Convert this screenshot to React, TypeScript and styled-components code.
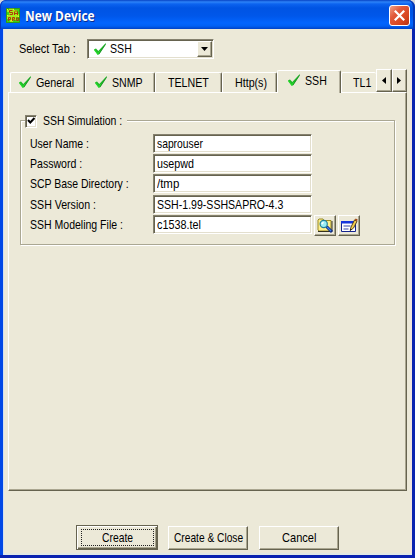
import React, { useLayoutEffect, useRef, useState } from 'react';
import styled, { createGlobalStyle, css } from 'styled-components';

const face = '#ece9d8';
const shade = '#85816f';
const dark = '#66634f';

const GlobalStyle = createGlobalStyle`
  * { box-sizing: border-box; }
  html, body { margin: 0; padding: 0; background: #d8d8d8; overflow: hidden; }
  button, input { font: inherit; margin: 0; }
`;

const Window = styled.main`
  width: 415px;
  height: 558px;
  display: flex;
  flex-direction: column;
  overflow: hidden;
  border-radius: 6px 7px 0 0;
  background: linear-gradient(90deg, #0148e6 0, #0148e6 50%, #0a22b0 100%);
  box-shadow: inset 0 -3px #0a22b0;
  color: #000;
  font: 13px/16px 'Liberation Sans', Arial, sans-serif;
`;

const TitleBar = styled.header`
  height: 29px;
  flex: none;
  display: flex;
  align-items: flex-start;
  padding: 8px 5px 0 6px;
  border-radius: 6px 7px 0 0;
  background: linear-gradient(#0743c4 0, #2d83f8 2px, #0c63ef 4px, #0054e3 8px, #0057ea 16px, #0265fe 23px, #0060f4 26px, #0042c6 29px);
  box-shadow: inset 1px 0 #0831b8, inset -2px 0 #0437b4;
`;

const Title = styled.h1`
  margin: -1px 0 0 5px;
  flex: 1;
  color: #fff;
  font: bold 14px/18px 'Open Sans', 'Noto Sans', sans-serif;
  text-shadow: 1px 1px #0a2a8c;
`;

const CloseButton = styled.button`
  width: 21px;
  height: 21px;
  margin-top: -3px;
  padding: 0;
  border: 1px solid #fff;
  border-radius: 3px;
  background: linear-gradient(135deg, #f0a188, #e1593a 35%, #d84620 70%, #b93412);
  svg { display: block; }
`;

const Client = styled.div`
  flex: none;
  width: 409px;
  height: 526px;
  margin-left: 3px;
  padding: 9px 6px 0 5px;
  background: ${face};
  box-shadow: inset 1px 0 #d4e0ee, inset 0 -2px #e2e9e4, inset -2px 0 #f1e4dc;
`;

const TextBox = styled.span<{ $w: number }>`
  display: block;
  flex: none;
  width: ${p => p.$w}px;
  white-space: nowrap;
`;

const Glyphs = styled.span`
  display: inline-block;
  transform-origin: 0 50%;
`;

function Text({ w, children }: { w: number; children: string }) {
  const ref = useRef<HTMLSpanElement>(null);
  const [scale, setScale] = useState(1);
  useLayoutEffect(() => {
    if (ref.current) setScale(w / ref.current.offsetWidth);
  }, [w, children]);
  return (
    <TextBox $w={w}>
      <Glyphs ref={ref} style={{ transform: `scaleX(${scale})` }}>{children}</Glyphs>
    </TextBox>
  );
}

const SelectRow = styled.div`
  display: flex;
  align-items: center;
  height: 20px;
  margin-top: 1px;
  padding-left: 9px;
  gap: 13px;
`;

const SelectLabel = styled.div`
  padding-left: 2px;
  width: 57px;
`;

const sunken = css`
  background: #fff;
  border: 1px solid;
  border-color: ${shade} #fff #fff ${shade};
  box-shadow: inset 1px 1px ${dark}, inset -1px -1px #e3dfce;
`;

const raised = css`
  background: ${face};
  border: 1px solid;
  border-color: #fff ${dark} ${dark} #fff;
  box-shadow: inset -1px -1px #aaa690;
`;

const Select = styled.div`
  ${sunken}
  width: 127px;
  height: 20px;
  display: flex;
  align-items: center;
  padding: 0 1px 0 5px;
  gap: 3px;
`;

const DropButton = styled.button`
  ${raised}
  width: 15px;
  height: 16px;
  padding: 0;
  margin-left: auto;
  svg { display: block; }
`;

const TabStrip = styled.div`
  display: flex;
  align-items: flex-end;
  height: 23px;
  margin-top: 10px;
  padding-left: 2px;
`;

const Tab = styled.div<{ $w: number; $pad: number; $active?: boolean }>`
  width: ${p => p.$w}px;
  height: 20px;
  flex: none;
  display: flex;
  align-items: flex-start;
  gap: 4px;
  padding: 2px 0 0 ${p => p.$pad}px;
  border: 1px solid;
  border-color: #fff ${dark} transparent #fff;
  border-bottom: 0;
  border-radius: 2px 2px 0 0;
  box-shadow: inset -1px 0 #b5b19e;
  overflow: hidden;
  ${p => p.$active && css`
    position: relative;
    z-index: 1;
    height: 23px;
    margin-bottom: -1px;
    background: ${face};
  `}
  &:last-of-type { border-right: 0; box-shadow: none; }
`;

const ScrollButton = styled.button`
  ${raised}
  flex: none;
  width: 15.5px;
  height: 23px;
  padding: 0;
  display: grid;
  place-items: center;
`;

const Panel = styled.section`
  width: 399px;
  height: 399px;
  padding: 22px 11px 0;
  border: 1px solid;
  border-color: #fff ${dark} ${dark} #fff;
  box-shadow: inset -1px -1px #aaa690;
`;

const Group = styled.div`
  width: 375px;
  height: 125px;
  margin-top: 5px;
  border: 1px solid #aaa793;
  box-shadow: inset 1px 1px #fff, 1px 1px #fff;
`;

const Legend = styled.label`
  display: flex;
  align-items: center;
  width: 102px;
  height: 16px;
  margin: -8px 0 0 4px;
  gap: 6px;
  background: ${face};
`;

const CheckBox = styled.span`
  ${sunken}
  flex: none;
  width: 12px;
  height: 13px;
  svg { display: block; }
`;

const Fields = styled.div`
  display: grid;
  grid-template-rows: 20px 20px 21px 20px 19px;
  margin: 5px 0 0 9px;
`;

const Field = styled.div`
  display: grid;
  grid-template-columns: 123px 159px 24px 24px;
  height: 19px;
  align-items: start;
`;

const FieldLabel = styled.div`
  padding-top: 2px;
`;

const Input = styled.div`
  ${sunken}
  height: 19px;
  padding: 1px 0 0 3px;
`;

const ToolButton = styled.button`
  ${raised}
  width: 22px;
  height: 21px;
  margin-left: 2px;
  padding: 0;
  svg { display: block; }
`;

const Actions = styled.footer`
  display: flex;
  align-items: flex-end;
  height: 25px;
  margin-top: 34px;
  padding-left: 68px;
`;

const Action = styled.button<{ $focus?: boolean; $w: number; $gap?: number }>`
  ${raised}
  width: ${p => p.$w}px;
  height: 24px;
  margin-left: ${p => p.$gap ?? 0}px;
  padding: 0;
  display: flex;
  align-items: center;
  justify-content: center;
  ${p => p.$focus && css`
    height: 25px;
    border-color: ${dark};
    box-shadow: inset 1px 1px #fff, inset -1px -1px ${dark}, inset -2px -2px #aaa690;
  `}
`;

const FocusRing = styled.span`
  width: 73px;
  height: 17px;
  display: flex;
  align-items: center;
  justify-content: center;
  border: 1px dotted #222;
`;

const TickSvg = styled.svg`
  flex: none;
`;

const Tick = () => (
  <TickSvg width="14" height="14" viewBox="0 0 14 14">
    <path d="M1 7.2 3 6.5 5.3 9 12.8 1 12.8 2.2 6 12.5 4.5 12.5Z" fill="#20b929" />
    <path d="m1.5 7.8 3.3 4.2L7 9" fill="none" stroke="#27dc2c" strokeWidth="1.2" />
    <path d="M6 12 12.5 2.3" stroke="#14811c" strokeWidth=".7" />
  </TickSvg>
);

const AppIcon = () => (
  <svg width="14" height="15" viewBox="0 0 14 15">
    <path fill="#3fd514" d="M0 0h14v15H0z" />
    <path d="M3 0h5v2h3v4h2v3h-3v3H7v2H4v-3H1V7h2V4H1V2h2z" fill="#a8ee18" />
    <path d="M6.5 2.5h-3v2h3v2h-3M8.5 7V4l1.5-1.5L11.500 4v3M8.500 5.500h3M2.500 13V9.500h2v2h-2M6.500 13V9.500h2v1.500h-1l1.500 2M10.500 10h2v2.500h-2z" stroke="#b03a08" fill="none" />
    <path d="M1 1h1v1H1zm6 0h1v1H7zM1 7h1v1H1zm11 1h1v1h-1zM5 12h1v1H5z" fill="#f5f51d" />
    <path d="M.5.5h13v14H.5z" stroke="#276b20" fill="none" strokeWidth=".6" />
  </svg>
);

const FolderSearch = () => (
  <svg width="20" height="19" viewBox="0 0 20 19">
    <path d="M3 14V4l1-1h4l1 1.5h7V15H4z" fill="#ffef8c" stroke="#9b8b20" />
    <path d="M3 15.5h14V5" fill="none" stroke="#35311d" />
    <path d="m11.5 10.5 5.5 5.5" stroke="#0b277d" strokeWidth="3" />
    <path d="m12 11 4 4" stroke="#3b7eed" strokeWidth="1.2" />
    <circle cx="8.7" cy="8" r="3.6" fill="#9aeef4" stroke="#237f9d" strokeWidth="1.2" />
    <path d="M6.7 8 8.5 6.2" stroke="#fff" strokeWidth="1.5" />
  </svg>
);

const EditForm = () => (
  <svg width="20" height="19" viewBox="0 0 20 19">
    <path d="M2.5 5.5h14v10h-14z" fill="#fff" stroke="#14238d" />
    <path d="M2 5h15v2.5H2z" fill="#1535dc" />
    <path d="M4.5 10h7m-7 3h5" stroke="#3544a9" />
    <path d="m12 11 3.5-7 2.5 1.3-3.5 6.8-3.3 2.4z" fill="#f5cf4d" stroke="#443516" strokeWidth=".9" />
    <path d="m15.5 4 2.5 1.2.7-1.8-2-1z" fill="#a34b18" />
    <path d="m11 14.7.3-2 1.5.9z" fill="#111" />
  </svg>
);

const fields = [
  { label: 'User Name :', lw: 59, value: 'saprouser', vw: 46 },
  { label: 'Password :', lw: 52, value: 'usepwd', vw: 37 },
  { label: 'SCP Base Directory :', lw: 99, value: '/tmp', vw: 22 },
  { label: 'SSH Version :', lw: 66, value: 'SSH-1.99-SSHSAPRO-4.3', vw: 126 },
  { label: 'SSH Modeling File :', lw: 93, value: 'c1538.tel', vw: 44, tools: true },
];

export default function App() {
  return (
    <>
      <GlobalStyle />
      <Window>
        <TitleBar>
          <AppIcon />
          <Title><Text w={70}>New Device</Text></Title>
          <CloseButton aria-label="Close">
            <svg width="19" height="19" viewBox="0 0 19 19"><path d="m4.8 4.8 9.4 9.4m0-9.4-9.4 9.4" stroke="#fff" strokeWidth="2.2" /></svg>
          </CloseButton>
        </TitleBar>
        <Client>
          <SelectRow>
            <SelectLabel><Text w={57}>Select Tab :</Text></SelectLabel>
            <Select>
              <Tick />
              <Text w={22}>SSH</Text>
              <DropButton aria-label="Open list">
                <svg width="13" height="14" viewBox="0 0 13 14"><path d="M3 5h7L6.5 9z" /></svg>
              </DropButton>
            </Select>
          </SelectRow>
          <TabStrip>
            <Tab $w={75} $pad={7}><Tick /><Text w={38}>General</Text></Tab>
            <Tab $w={70} $pad={8}><Tick /><Text w={31}>SNMP</Text></Tab>
            <Tab $w={67} $pad={12}><Text w={41}>TELNET</Text></Tab>
            <Tab $w={55} $pad={12}><Text w={32}>Http(s)</Text></Tab>
            <Tab $w={64} $pad={9} $active><Tick /><Text w={22}>SSH</Text></Tab>
            <Tab $w={35} $pad={11}><Text w={18}>TL1</Text></Tab>
            <ScrollButton aria-label="Previous tabs">
              <svg width="8" height="9"><path d="m6 1v7L2 4.5z" /></svg>
            </ScrollButton>
            <ScrollButton aria-label="Next tabs">
              <svg width="8" height="9"><path d="m2 1v7l4-3.5z" /></svg>
            </ScrollButton>
          </TabStrip>
          <Panel>
            <Group>
              <Legend>
                <CheckBox>
                  <svg width="10" height="11"><path d="m2 4 2.3 2.5L8.500 2" fill="none" stroke="#000" strokeWidth="2" /></svg>
                </CheckBox>
                <Text w={79}>SSH Simulation :</Text>
              </Legend>
              <Fields>
                {fields.map(f => (
                  <Field key={f.label}>
                    <FieldLabel><Text w={f.lw}>{f.label}</Text></FieldLabel>
                    <Input><Text w={f.vw}>{f.value}</Text></Input>
                    {f.tools && <ToolButton aria-label="Browse"><FolderSearch /></ToolButton>}
                    {f.tools && <ToolButton aria-label="Edit"><EditForm /></ToolButton>}
                  </Field>
                ))}
              </Fields>
            </Group>
          </Panel>
          <Actions>
            <Action $w={82} $focus><FocusRing><Text w={31}>Create</Text></FocusRing></Action>
            <Action $w={80} $gap={10}><Text w={69}>Create &amp; Close</Text></Action>
            <Action $w={80} $gap={11}><Text w={34}>Cancel</Text></Action>
          </Actions>
        </Client>
      </Window>
    </>
  );
}
